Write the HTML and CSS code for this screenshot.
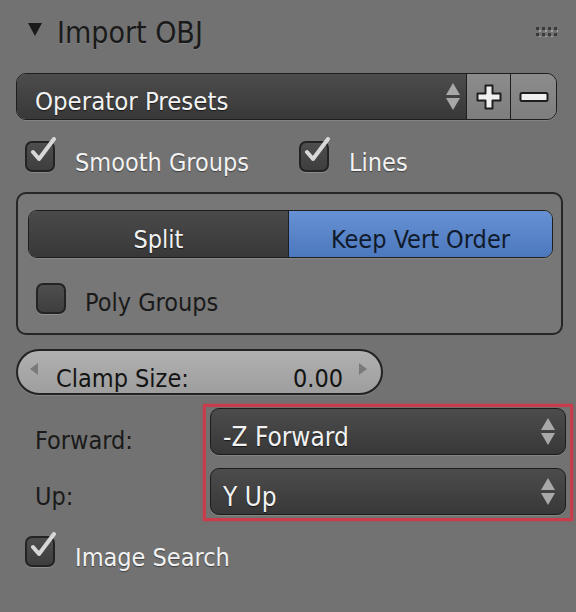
FILE: index.html
```html
<!DOCTYPE html>
<html>
<head>
<meta charset="utf-8">
<link rel="stylesheet" href="styles.css">
</head>
<body>
<div class="panel">
  <div class="header">
    <span class="tri"></span>
    <span class="title">Import OBJ</span>
    <svg class="grip" width="22" height="10" viewBox="0 0 22 10">
      <g fill="#3a3a3a">
        <rect x="0" y="0" width="3" height="3"/><rect x="6" y="0" width="3" height="3"/><rect x="12" y="0" width="3" height="3"/><rect x="18" y="0" width="3" height="3"/>
        <rect x="0" y="6" width="3" height="3"/><rect x="6" y="6" width="3" height="3"/><rect x="12" y="6" width="3" height="3"/><rect x="18" y="6" width="3" height="3"/>
      </g>
      <g fill="#a0a0a0">
        <rect x="3" y="3" width="2" height="2"/><rect x="9" y="3" width="2" height="2"/><rect x="15" y="3" width="2" height="2"/><rect x="21" y="3" width="1" height="2"/>
        <rect x="3" y="9" width="2" height="1"/><rect x="9" y="9" width="2" height="1"/><rect x="15" y="9" width="2" height="1"/>
      </g>
    </svg>
  </div>

  <div class="presets">
    <div class="menu presets-menu">
      <span class="menu-text">Operator Presets</span>
      <span class="updown"><span class="up"></span><span class="down"></span></span>
    </div>
    <div class="tool-btn">
      <svg width="30" height="30" viewBox="0 0 30 30"><path d="M11.5 3.5h7v8h8v7h-8v8h-7v-8h-8v-7h8z" fill="#f0f0f0" stroke="#1e1e1e" stroke-width="2" stroke-linejoin="round"/></svg>
    </div>
    <div class="tool-btn last">
      <svg width="32" height="14" viewBox="0 0 32 14"><rect x="2.5" y="3" width="27" height="8" rx="1.5" fill="#f0f0f0" stroke="#1e1e1e" stroke-width="2"/></svg>
    </div>
  </div>

  <div class="check-row">
    <label class="check"><span class="box checked"><svg class="tick" width="30" height="30" viewBox="0 0 30 30"><path d="M6 15l6 7L27 2" fill="none" stroke="#d8d8d8" stroke-width="4" stroke-linecap="round" stroke-linejoin="round"/></svg></span><span class="light">Smooth Groups</span></label>
    <label class="check second"><span class="box checked"><svg class="tick" width="30" height="30" viewBox="0 0 30 30"><path d="M6 15l6 7L27 2" fill="none" stroke="#d8d8d8" stroke-width="4" stroke-linecap="round" stroke-linejoin="round"/></svg></span><span class="light">Lines</span></label>
  </div>

  <div class="group">
    <div class="toggle">
      <div class="seg">Split</div>
      <div class="seg active">Keep Vert Order</div>
    </div>
    <label class="check poly"><span class="box"></span><span class="dark">Poly Groups</span></label>
  </div>

  <div class="clamp">
    <span class="arrow-l"></span>
    <span class="clamp-label">Clamp Size:</span>
    <span class="clamp-val">0.00</span>
    <span class="arrow-r"></span>
  </div>

  <div class="axis">
    <div class="labels">
      <div class="lab">Forward:</div>
      <div class="lab">Up:</div>
    </div>
    <div class="highlight">
      <div class="menu axis-menu">
        <span class="menu-text">-Z Forward</span>
        <span class="updown"><span class="up"></span><span class="down"></span></span>
      </div>
      <div class="menu axis-menu">
        <span class="menu-text">Y Up</span>
        <span class="updown"><span class="up"></span><span class="down"></span></span>
      </div>
    </div>
  </div>

  <div class="check-row last-row">
    <label class="check"><span class="box checked"><svg class="tick" width="30" height="30" viewBox="0 0 30 30"><path d="M6 15l6 7L27 2" fill="none" stroke="#d8d8d8" stroke-width="4" stroke-linecap="round" stroke-linejoin="round"/></svg></span><span class="light">Image Search</span></label>
  </div>
</div>
</body>
</html>
```

FILE: styles.css
```css
html, body {
  margin: 0;
  padding: 0;
  background: #727272;
  width: 576px;
  height: 612px;
  overflow: hidden;
}
body {
  font-family: "DejaVu Sans Condensed", "DejaVu Sans", sans-serif;
  font-size: 25px;
  color: #1c1c1c;
}
.panel {
  display: flex;
  flex-direction: column;
}
.header {
  height: 64px;
  display: flex;
  align-items: center;
  padding-left: 28px;
  padding-right: 18px;
  box-sizing: border-box;
}
.tri {
  width: 0;
  height: 0;
  border-left: 7px solid transparent;
  border-right: 7px solid transparent;
  border-top: 13px solid #1a1a1a;
  margin-top: -6px;
}
.title {
  font-size: 30px;
  margin-left: 15px;
  color: #1a1a1a;
  text-shadow: 0 1px 0 rgba(160,160,160,0.35);
}
.grip {
  margin-left: auto;
}
.presets {
  margin: 9px 0 0 16px;
  width: 541px;
  height: 47px;
  display: flex;
  border: 1px solid #1e1e1e;
  border-radius: 10px;
  box-sizing: border-box;
  overflow: hidden;
  box-shadow: 0 1px 0 rgba(150,150,150,0.5);
}
.menu {
  display: flex;
  align-items: center;
  background: linear-gradient(#4c4c4c, #383838);
  color: #f2f2f2;
  box-sizing: border-box;
}
.menu-text {
  text-shadow: 0 1px 1px rgba(0,0,0,0.6);
}
.presets-menu {
  flex: 1;
  padding-left: 18px;
  padding-right: 6px;
  border-right: 1px solid #1e1e1e;
  font-size: 25.5px;
}
.presets-menu .menu-text {
  padding-top: 8px;
}
.updown {
  margin-left: auto;
  display: flex;
  flex-direction: column;
  gap: 3px;
  align-items: center;
}
.up {
  width: 0; height: 0;
  border-left: 7px solid transparent;
  border-right: 7px solid transparent;
  border-bottom: 12px solid #a8a8a8;
}
.down {
  width: 0; height: 0;
  border-left: 7px solid transparent;
  border-right: 7px solid transparent;
  border-top: 12px solid #a8a8a8;
}
.tool-btn {
  width: 43px;
  background: linear-gradient(#8c8c8c, #7e7e7e);
  border-right: 1px solid #1e1e1e;
  display: flex;
  align-items: center;
  justify-content: center;
}
.tool-btn.last {
  border-right: none;
  width: 45px;
}
.check-row {
  margin: 20px 0 0 25px;
  height: 32px;
  display: flex;
  align-items: center;
}
.check {
  display: flex;
  align-items: center;
}
.check.second {
  margin-left: 50px;
}
.box {
  width: 30px;
  height: 31px;
  box-sizing: border-box;
  border: 2px solid #232323;
  border-radius: 7px;
  background: linear-gradient(#4e4e4e, #3e3e3e);
  box-shadow: 0 1px 0 rgba(170,170,170,0.45);
  position: relative;
  flex: none;
}
.tick {
  position: absolute;
  left: 0;
  top: -6px;
}
.light {
  margin-left: 20px;
  color: #f2f2f2;
  text-shadow: 0 1px 1px rgba(0,0,0,0.45);
  margin-top: 12px;
}
.dark {
  margin-left: 19px;
  color: #1a1a1a;
  margin-top: 8px;
}
.group {
  margin: 20px 0 0 16px;
  width: 547px;
  height: 143px;
  box-sizing: border-box;
  border: 2px solid #262626;
  border-radius: 10px;
  background: #777777;
  padding: 16px 8px 0 10px;
  display: flex;
  flex-direction: column;
}
.toggle {
  display: flex;
  height: 48px;
  border: 1px solid #1e1e1e;
  border-radius: 9px;
  overflow: hidden;
  box-sizing: border-box;
  box-shadow: 0 1px 0 rgba(150,150,150,0.5);
}
.seg {
  flex: 1;
  display: flex;
  align-items: center;
  justify-content: center;
  background: linear-gradient(#4a4a4a, #383838);
  color: #f2f2f2;
  text-shadow: 0 1px 1px rgba(0,0,0,0.6);
  padding-top: 11px;
  box-sizing: border-box;
}
.seg.active {
  background: linear-gradient(#6791d4, #4c78bd);
  color: #111a2a;
  text-shadow: none;
  border-left: 1px solid #1e1e1e;
  flex: 0 0 264px;
}
.check.poly {
  margin: 22px 0 0 8px;
}
.clamp {
  margin: 14px 0 0 16px;
  width: 367px;
  height: 46px;
  box-sizing: border-box;
  border: 2px solid #222;
  border-radius: 23px;
  background: linear-gradient(#b0b0b0, #9e9e9e);
  display: flex;
  align-items: center;
  padding: 0 14px 0 12px;
  color: #141414;
  box-shadow: 0 1px 0 rgba(150,150,150,0.5);
}
.clamp-label {
  margin-left: 18px;
  padding-top: 12px;
}
.clamp-val {
  margin-left: auto;
  padding-top: 12px;
}
.arrow-l {
  width: 0; height: 0;
  border-top: 6px solid transparent;
  border-bottom: 6px solid transparent;
  border-right: 8px solid #7a7a7a;
  margin-top: -6px;
}
.arrow-r {
  width: 0; height: 0;
  border-top: 6px solid transparent;
  border-bottom: 6px solid transparent;
  border-left: 8px solid #7a7a7a;
  margin-left: 16px;
  margin-top: -6px;
}
.axis {
  margin-top: 9px;
  display: flex;
  align-items: flex-start;
}
.labels {
  width: 203px;
  height: 117px;
  box-sizing: border-box;
  padding: 5px 0 0 35px;
  display: flex;
  flex-direction: column;
}
.lab {
  height: 56px;
  display: flex;
  align-items: center;
  padding-top: 6px;
  box-sizing: border-box;
  color: #1a1a1a;
}
.highlight {
  width: 370px;
  height: 117px;
  box-sizing: border-box;
  border: 3px solid #c83c4c;
  box-shadow: 0 0 3px rgba(200,60,76,0.6);
  padding: 1px 4px 0 4px;
  display: flex;
  flex-direction: column;
  gap: 13px;
}
.axis-menu {
  height: 47px;
  border: 1px solid #1c1c1c;
  border-radius: 9px;
  padding: 0 10px 0 12px;
  font-size: 26px;
  box-shadow: 0 1px 0 rgba(150,150,150,0.5);
}
.axis-menu .menu-text {
  padding-top: 11px;
}
.last-row {
  margin-top: 14px;
}
```
